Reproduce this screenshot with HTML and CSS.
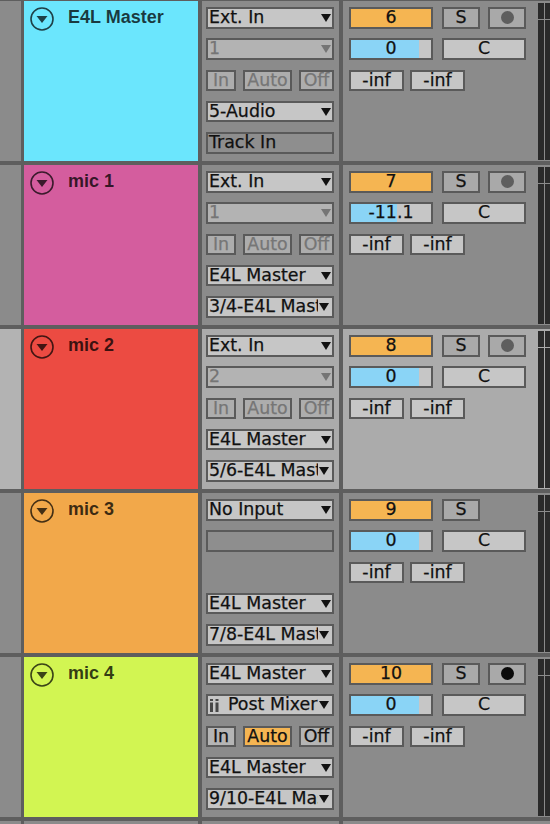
FILE: index.html
```html
<!DOCTYPE html>
<html>
<head>
<meta charset="utf-8">
<link rel="stylesheet" href="styles.css">
</head>
<body>
<div class="rack">

  <div class="track t-cyan">
    <div class="strip"></div>
    <div class="head"><svg class="fold" viewBox="0 0 24 24"><circle cx="12" cy="12" r="11"/><path d="M6.5 9H17.5L12 16Z"/></svg><span class="name">E4L Master</span></div>
    <div class="io">
      <div class="dd"><span class="lbl">Ext. In</span><span class="arr"><i class="tri"></i></span></div>
      <div class="dd dis"><span class="lbl">1</span><span class="arr"><i class="tri"></i></span></div>
      <div class="mon"><span class="btn b-in">In</span><span class="btn b-auto">Auto</span><span class="btn b-off">Off</span></div>
      <div class="dd"><span class="lbl">5-Audio</span><span class="arr"><i class="tri"></i></span></div>
      <div class="field">Track In</div>
    </div>
    <div class="mix">
      <div class="line"><div class="num">6</div><div class="sq">S</div><div class="sq rec"><i class="dot"></i></div></div>
      <div class="line"><div class="vol"><div class="fill" style="width:85%"></div><span>0</span></div><div class="pan">C</div></div>
      <div class="line"><div class="db">-inf</div><div class="db">-inf</div></div>
    </div>
    <div class="meter"><div class="ch"><i></i><b></b></div><div class="ch"><i></i><b></b></div></div>
  </div>

  <div class="track t-pink">
    <div class="strip"></div>
    <div class="head"><svg class="fold" viewBox="0 0 24 24"><circle cx="12" cy="12" r="11"/><path d="M6.5 9H17.5L12 16Z"/></svg><span class="name">mic 1</span></div>
    <div class="io">
      <div class="dd"><span class="lbl">Ext. In</span><span class="arr"><i class="tri"></i></span></div>
      <div class="dd dis"><span class="lbl">1</span><span class="arr"><i class="tri"></i></span></div>
      <div class="mon"><span class="btn b-in">In</span><span class="btn b-auto">Auto</span><span class="btn b-off">Off</span></div>
      <div class="dd"><span class="lbl">E4L Master</span><span class="arr"><i class="tri"></i></span></div>
      <div class="dd cut"><span class="lbl">3/4-E4L Master</span><span class="arr"><i class="tri"></i></span></div>
    </div>
    <div class="mix">
      <div class="line"><div class="num">7</div><div class="sq">S</div><div class="sq rec"><i class="dot"></i></div></div>
      <div class="line"><div class="vol"><div class="fill" style="width:57.5%"></div><span>-11.1</span></div><div class="pan">C</div></div>
      <div class="line"><div class="db">-inf</div><div class="db">-inf</div></div>
    </div>
    <div class="meter"><div class="ch"><i></i><b></b></div><div class="ch"><i></i><b></b></div></div>
  </div>

  <div class="track t-red sel">
    <div class="strip"></div>
    <div class="head"><svg class="fold" viewBox="0 0 24 24"><circle cx="12" cy="12" r="11"/><path d="M6.5 9H17.5L12 16Z"/></svg><span class="name">mic 2</span></div>
    <div class="io">
      <div class="dd"><span class="lbl">Ext. In</span><span class="arr"><i class="tri"></i></span></div>
      <div class="dd dis"><span class="lbl">2</span><span class="arr"><i class="tri"></i></span></div>
      <div class="mon"><span class="btn b-in">In</span><span class="btn b-auto">Auto</span><span class="btn b-off">Off</span></div>
      <div class="dd"><span class="lbl">E4L Master</span><span class="arr"><i class="tri"></i></span></div>
      <div class="dd cut"><span class="lbl">5/6-E4L Master</span><span class="arr"><i class="tri"></i></span></div>
    </div>
    <div class="mix">
      <div class="line"><div class="num">8</div><div class="sq">S</div><div class="sq rec"><i class="dot"></i></div></div>
      <div class="line"><div class="vol"><div class="fill" style="width:85%"></div><span>0</span></div><div class="pan">C</div></div>
      <div class="line"><div class="db">-inf</div><div class="db">-inf</div></div>
    </div>
    <div class="meter"><div class="ch"><i></i><b></b></div><div class="ch"><i></i><b></b></div></div>
  </div>

  <div class="track t-orange">
    <div class="strip"></div>
    <div class="head"><svg class="fold" viewBox="0 0 24 24"><circle cx="12" cy="12" r="11"/><path d="M6.5 9H17.5L12 16Z"/></svg><span class="name">mic 3</span></div>
    <div class="io">
      <div class="dd"><span class="lbl">No Input</span><span class="arr"><i class="tri"></i></span></div>
      <div class="field"></div>
      <div class="gap"></div>
      <div class="dd"><span class="lbl">E4L Master</span><span class="arr"><i class="tri"></i></span></div>
      <div class="dd cut"><span class="lbl">7/8-E4L Master</span><span class="arr"><i class="tri"></i></span></div>
    </div>
    <div class="mix">
      <div class="line"><div class="num">9</div><div class="sq">S</div></div>
      <div class="line"><div class="vol"><div class="fill" style="width:85%"></div><span>0</span></div><div class="pan">C</div></div>
      <div class="line"><div class="db">-inf</div><div class="db">-inf</div></div>
    </div>
    <div class="meter"><div class="ch"><i></i><b></b></div><div class="ch"><i></i><b></b></div></div>
  </div>

  <div class="track t-green">
    <div class="strip"></div>
    <div class="head"><svg class="fold" viewBox="0 0 24 24"><circle cx="12" cy="12" r="11"/><path d="M6.5 9H17.5L12 16Z"/></svg><span class="name">mic 4</span></div>
    <div class="io">
      <div class="dd"><span class="lbl">E4L Master</span><span class="arr"><i class="tri"></i></span></div>
      <div class="dd cut"><span class="lbl"><svg class="ii" viewBox="0 0 9 13"><rect x="0" y="0" width="3" height="2"/><rect x="0" y="3.5" width="3" height="9.5"/><rect x="5.5" y="0" width="3" height="2"/><rect x="5.5" y="3.5" width="3" height="9.5"/></svg>Post Mixer</span><span class="arr"><i class="tri"></i></span></div>
      <div class="mon on"><span class="btn b-in">In</span><span class="btn b-auto act">Auto</span><span class="btn b-off">Off</span></div>
      <div class="dd"><span class="lbl">E4L Master</span><span class="arr"><i class="tri"></i></span></div>
      <div class="dd cut"><span class="lbl">9/10-E4L Master</span><span class="arr"><i class="tri"></i></span></div>
    </div>
    <div class="mix">
      <div class="line"><div class="num">10</div><div class="sq">S</div><div class="sq rec"><i class="dot armed"></i></div></div>
      <div class="line"><div class="vol"><div class="fill" style="width:85%"></div><span>0</span></div><div class="pan">C</div></div>
      <div class="line"><div class="db">-inf</div><div class="db">-inf</div></div>
    </div>
    <div class="meter"><div class="ch"><i></i><b></b></div><div class="ch"><i></i><b></b></div></div>
  </div>

  <div class="track t-none">
    <div class="strip"></div>
    <div class="head"></div>
    <div class="io"></div>
    <div class="mix"></div>
    <div class="meter"></div>
  </div>

</div>
</body>
</html>
```

FILE: styles.css
```css
* { box-sizing: border-box; margin: 0; padding: 0; }

html, body {
  width: 550px;
  height: 824px;
  overflow: hidden;
  background: #5e5e5e;
}

body {
  font-family: "DejaVu Sans", sans-serif;
  font-size: 17.4px;
  color: #111;
}

.rack {
  width: 550px;
  padding-top: 1px;
}

.track {
  display: flex;
  height: 160px;
  margin-bottom: 4px;
}

.track.t-none {
  height: 3px;
  margin-bottom: 0;
}

.strip {
  width: 21px;
  flex: none;
  background: #8b8b8b;
}

.head {
  width: 174px;
  flex: none;
  margin-left: 3px;
  display: flex;
  align-items: flex-start;
  gap: 14px;
  padding: 6px 0 0 6px;
  background: #8b8b8b;
}

.t-cyan .head { background: #6be6fd; }
.t-pink .head { background: #d45d9e; }
.t-red .head { background: #ec4b42; }
.t-orange .head { background: #f2a84a; }
.t-green .head { background: #d2f552; }

.fold {
  width: 24px;
  height: 24px;
  flex: none;
}

.fold circle {
  fill: none;
  stroke: rgba(0, 0, 0, 0.72);
  stroke-width: 1.6;
}

.fold path { fill: rgba(0, 0, 0, 0.72); }

.name {
  font-family: "Liberation Sans", sans-serif;
  font-weight: 700;
  font-size: 18px;
  line-height: 20px;
  color: rgba(0, 0, 0, 0.76);
  white-space: nowrap;
}

.io {
  width: 137px;
  flex: none;
  margin-left: 4px;
  background: #8b8b8b;
  padding: 6px 5px 0 4px;
  display: flex;
  flex-direction: column;
  gap: 9.8px;
}

.io > * {
  height: 21.5px;
  flex: none;
}

.dd,
.field,
.btn,
.line > div {
  -webkit-text-stroke: 0.25px currentColor;
}

.dd {
  position: relative;
  background: #c6c6c6;
  border: 2px solid #5a5a5a;
  padding-left: 1px;
  line-height: 17.5px;
  white-space: nowrap;
  overflow: hidden;
}

.lbl { display: inline-flex; align-items: center; }

.arr {
  position: absolute;
  right: 0;
  top: 0;
  bottom: 0;
  width: 13px;
  background: inherit;
  display: flex;
  align-items: center;
  justify-content: center;
}

.dd.cut .arr {
  width: 14px;
  justify-content: flex-start;
  padding-left: 1px;
}

.tri {
  width: 0;
  height: 0;
  border-left: 5px solid transparent;
  border-right: 5px solid transparent;
  border-top: 8.5px solid #111;
}

.dd.dis { background: #b3b3b3; color: #757575; }
.dd.dis .tri { border-top-color: #757575; }

.ii {
  width: 9px;
  height: 13px;
  margin: 0 9px 0 1px;
  fill: #474747;
}

.field {
  border: 2px solid #5a5a5a;
  background: #8e8e8e;
  padding-left: 1px;
  line-height: 17.5px;
  white-space: nowrap;
}

.mon {
  display: flex;
  gap: 7px;
}

.btn {
  border: 2px solid #5a5a5a;
  background: #adadad;
  color: #767676;
  text-align: center;
  line-height: 17.5px;
  white-space: nowrap;
  overflow: hidden;
}

.b-in { width: 30px; }
.b-auto { width: 49px; }
.b-off { width: 35px; }

.mon.on .btn { background: #b5b5b5; color: #111; }
.mon.on .b-auto.act { background: #f5b552; }

.mix {
  width: 195px;
  flex: none;
  margin-left: 4px;
  background: #8b8b8b;
  padding: 6px 0 0 6px;
  display: flex;
  flex-direction: column;
  gap: 9.8px;
}

.line {
  display: flex;
  height: 21.5px;
}

.line > div {
  border: 2px solid #5a5a5a;
  text-align: center;
  line-height: 17.5px;
  white-space: nowrap;
}

.num {
  width: 84px;
  background: #f5b552;
}

.sq {
  width: 38px;
  margin-left: 9px;
  background: #a9a9a9;
}

.line > .rec {
  margin-left: 8px;
  display: flex;
  align-items: center;
  justify-content: center;
}

.dot {
  width: 13px;
  height: 13px;
  border-radius: 50%;
  background: #5e5e5e;
}

.dot.armed { background: #0a0a0a; }

.line > .vol {
  position: relative;
  width: 84px;
  background: #c6c6c6;
}

.fill {
  position: absolute;
  left: 0;
  top: 0;
  bottom: 0;
  background: #8ad4f6;
}

.vol span { position: relative; }

.pan {
  width: 84px;
  margin-left: 9px;
  background: #c6c6c6;
}

.db {
  width: 55px;
  background: #c6c6c6;
}

.db + .db { margin-left: 6px; }

.meter {
  width: 12px;
  flex: none;
  padding: 2px 0 1px;
  display: flex;
  gap: 1.3px;
  background: #8b8b8b;
}

.ch {
  width: 6px;
  flex: none;
  display: flex;
  flex-direction: column;
  gap: 1.5px;
}

.ch i {
  display: block;
  height: 15.5px;
  background: #2a2a2a;
}

.ch b {
  display: block;
  flex: 1;
  background: #2a2a2a;
}

.sel .strip { background: #b3b3b3; }
.sel .io,
.sel .mix,
.sel .meter { background: #ababab; }
```
